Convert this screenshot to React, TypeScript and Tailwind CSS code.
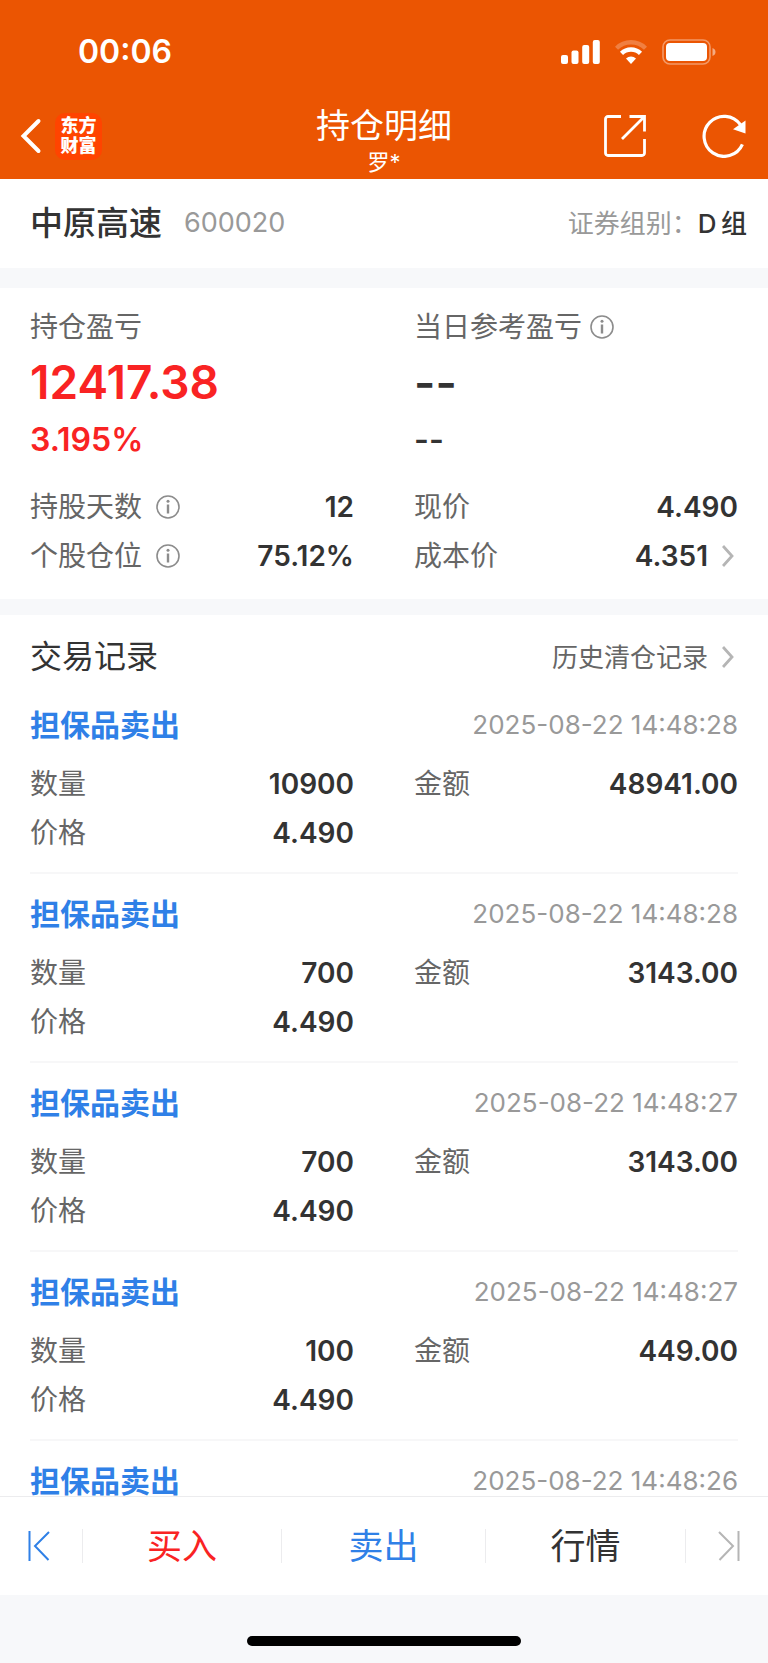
import type { ReactNode } from "react"

interface TradeRecord {
  type: string
  time: string
  details?: { quantity: string; amount: string; price: string }
}

const records: TradeRecord[] = [
  {
    type: "担保品卖出",
    time: "2025-08-22 14:48:28",
    details: { quantity: "10900", amount: "48941.00", price: "4.490" },
  },
  {
    type: "担保品卖出",
    time: "2025-08-22 14:48:28",
    details: { quantity: "700", amount: "3143.00", price: "4.490" },
  },
  {
    type: "担保品卖出",
    time: "2025-08-22 14:48:27",
    details: { quantity: "700", amount: "3143.00", price: "4.490" },
  },
  {
    type: "担保品卖出",
    time: "2025-08-22 14:48:27",
    details: { quantity: "100", amount: "449.00", price: "4.490" },
  },
  { type: "担保品卖出", time: "2025-08-22 14:48:26" },
]

function InfoIcon() {
  return (
    <svg viewBox="0 0 24 24" className="h-6 w-6 shrink-0 text-[#8c8c8c]" fill="none" stroke="currentColor" aria-hidden="true">
      <circle cx="12" cy="12" r="11" strokeWidth="1.6" />
      <path d="M12 9.5v9" strokeWidth="2.4" />
      <circle cx="12" cy="6.2" r="1.5" fill="currentColor" stroke="none" />
    </svg>
  )
}

function Chevron() {
  return (
    <svg viewBox="0 0 12 22" className="mr-1 h-[22px] w-3 shrink-0 text-[#b5b5b5]" fill="none" stroke="currentColor" strokeWidth="2.8" aria-hidden="true">
      <path d="M1 1l9 10L1 21" />
    </svg>
  )
}

function StatusBar() {
  return (
    <div className="flex h-[93px] items-center justify-between pt-2.5 pr-[52px] pl-[78px]">
      <span className="text-[32px] leading-10 font-semibold">00:06</span>
      <div className="flex items-center gap-[15px]">
        <svg viewBox="0 0 39 24" className="h-6 w-[39px]" fill="currentColor" aria-hidden="true">
          <rect x="0" y="15" width="7" height="9" rx="2" />
          <rect x="10.5" y="10.4" width="7" height="13.6" rx="2" />
          <rect x="21.2" y="5" width="7" height="19" rx="2" />
          <rect x="31.8" y="0" width="7" height="24" rx="2" />
        </svg>
        <svg viewBox="0 0 32 24" className="h-6 w-8" fill="none" stroke="currentColor" aria-hidden="true">
          <path d="M1.5 8.3a20.5 20.5 0 0 1 29 0" strokeWidth="4.4" opacity="0.25" />
          <path d="M6.5 13.4a13.5 13.5 0 0 1 19 0" strokeWidth="4.4" />
          <path d="M11 18.6a7.2 7.2 0 0 1 10 0L16 24z" fill="currentColor" stroke="none" />
        </svg>
        <svg viewBox="0 0 54 26" className="h-[26px] w-[54px]" fill="none" aria-hidden="true">
          <rect x="1" y="1" width="47" height="24" rx="7" stroke="currentColor" strokeWidth="1.6" opacity="0.4" />
          <rect x="4" y="4" width="41" height="18" rx="4" fill="currentColor" />
          <path d="M50.5 9c4 1.2 4 6.8 0 8z" fill="currentColor" opacity="0.5" />
        </svg>
      </div>
    </div>
  )
}

function NavBar() {
  return (
    <div className="grid h-[86px] grid-cols-3 items-center">
      <div className="flex items-center pl-5">
        <button type="button" aria-label="返回">
          <svg viewBox="0 0 22 36" className="h-9 w-[22px]" fill="none" stroke="currentColor" strokeWidth="4" strokeLinecap="round" aria-hidden="true">
            <path d="M18.5 3L3.5 18l15 15" />
          </svg>
        </button>
        <div className="ml-[13px] flex h-[47px] w-[47px] flex-col items-center justify-center rounded-[10px] bg-[#ff4400] text-[18px] leading-5 font-black">
          <span>东方</span>
          <span>财富</span>
        </div>
      </div>
      <div className="flex flex-col items-center pt-3">
        <h1 className="text-[34px] leading-10">持仓明细</h1>
        <p className="text-[22px] leading-8">罗*</p>
      </div>
      <div className="flex items-center justify-end gap-14 pr-[22px]">
        <button type="button" aria-label="分享">
          <svg viewBox="0 0 42 42" className="h-[42px] w-[42px]" fill="none" stroke="currentColor" strokeWidth="2.8" aria-hidden="true">
            <path d="M17 1.5H4A2.5 2.5 0 0 0 1.5 4v34A2.5 2.5 0 0 0 4 40.5h34a2.5 2.5 0 0 0 2.5-2.5V24" />
            <path d="M25.5 1.5h15v15M40 2L18 24" />
          </svg>
        </button>
        <button type="button" aria-label="刷新">
          <svg viewBox="0 0 44 44" className="h-11 w-11" fill="none" stroke="currentColor" strokeWidth="3.2" aria-hidden="true">
            <path d="M38.4 10.8A20 20 0 1 0 40.4 30.4" />
            <path d="M43.5 6.5v13L31 15.3z" fill="currentColor" stroke="none" />
          </svg>
        </button>
      </div>
    </div>
  )
}

function DataRow({ label, info, children }: { label: string; info?: boolean; children: ReactNode }) {
  return (
    <div className="flex h-[49px] items-center justify-between">
      <dt className="flex items-center gap-3.5 text-[#666]">
        {label}
        {info && <InfoIcon />}
      </dt>
      <dd className="flex items-center font-semibold text-[#333]">{children}</dd>
    </div>
  )
}

function RecordItem({ record }: { record: TradeRecord }) {
  return (
    <li className="border-b-2 border-[#f7f7f8] pt-1.5 pb-[15px] last:border-b-0 last:pb-0">
      <div className="flex h-[68px] items-center justify-between">
        <h3 className="text-[30px] leading-7 font-bold text-[#2f80e7]">{record.type}</h3>
        <time className="text-[26px] leading-7 text-[#999]">{record.time}</time>
      </div>
      {record.details && (
        <dl className="grid grid-cols-2 gap-x-[60px]">
          <DataRow label="数量">{record.details.quantity}</DataRow>
          <DataRow label="金额">{record.details.amount}</DataRow>
          <DataRow label="价格">{record.details.price}</DataRow>
        </dl>
      )}
    </li>
  )
}

export default function App() {
  return (
    <div className="flex h-screen flex-col bg-white font-['Inter','Noto_Sans_CJK_SC',sans-serif] text-[28px] text-[#333]">
      <header className="shrink-0 bg-[#eb5502] text-white">
        <StatusBar />
        <NavBar />
      </header>

      <main className="min-h-0 flex-1 overflow-hidden">
        <section className="flex h-[89px] items-center justify-between pr-[21px] pl-[30px]">
          <div className="flex items-center gap-[22px]">
            <h2 className="text-[33px] font-medium">中原高速</h2>
            <span className="text-[27px] text-[#999]">600020</span>
          </div>
          <p className="text-[26px]">
            <span className="text-[#999]">证券组别：</span>
            <span className="font-medium">{"D\u2009组"}</span>
          </p>
        </section>

        <div className="h-5 bg-[#f7f8fa]" />

        <section className="px-[30px] pt-4 pb-[19px]">
          <div className="grid grid-cols-2 gap-x-[60px] pb-4">
            <div>
              <h3 className="leading-[46px] text-[#666]">持仓盈亏</h3>
              <p className="text-[46px] leading-[64px] font-semibold text-[#f92323]">12417.38</p>
              <p className="text-[32px] leading-[52px] font-semibold text-[#f92323]">3.195%</p>
            </div>
            <div>
              <h3 className="flex items-center gap-2 leading-[46px] text-[#666]">
                当日参考盈亏
                <InfoIcon />
              </h3>
              <p className="text-[46px] leading-[64px] font-semibold">--</p>
              <p className="text-[32px] leading-[52px] font-semibold">--</p>
            </div>
          </div>
          <dl className="grid grid-cols-2 gap-x-[60px]">
            <DataRow label="持股天数" info>12</DataRow>
            <DataRow label="现价">4.490</DataRow>
            <DataRow label="个股仓位" info>75.12%</DataRow>
            <DataRow label="成本价">
              <button type="button" className="flex items-center gap-3.5">
                4.351
                <Chevron />
              </button>
            </DataRow>
          </dl>
        </section>

        <div className="h-4 bg-[#f7f8fa]" />

        <section className="px-[30px]">
          <div className="flex h-[70px] items-center justify-between pt-3.5">
            <h2 className="text-[32px]">交易记录</h2>
            <a href="#history" className="flex items-center gap-3.5 text-[26px] text-[#666]">
              历史清仓记录
              <Chevron />
            </a>
          </div>
          <ul>
            {records.map((record, index) => (
              <RecordItem key={index} record={record} />
            ))}
          </ul>
        </section>
      </main>

      <nav className="flex h-[99px] shrink-0 items-center border-t border-[#ececee] bg-white text-[35px]">
        <button type="button" aria-label="上一只" className="flex w-[82px] justify-center pr-1 text-[#2f80e7]">
          <svg viewBox="0 0 22 30" className="h-[30px] w-[22px]" fill="none" stroke="currentColor" strokeWidth="2" aria-hidden="true">
            <path d="M1.5 0v30M21 1L7 15l13.5 14" />
          </svg>
        </button>
        <div className="grid flex-1 grid-cols-[1fr_204px_1fr] divide-x divide-[#ececee] border-x border-[#ececee] leading-[34px]">
          <button type="button" className="text-[#f92323]">买入</button>
          <button type="button" className="text-[#2f80e7]">卖出</button>
          <button type="button">行情</button>
        </div>
        <button type="button" aria-label="下一只" className="flex w-[82px] justify-center pl-1 text-[#b5b5b5]">
          <svg viewBox="0 0 22 30" className="h-[30px] w-[22px]" fill="none" stroke="currentColor" strokeWidth="2" aria-hidden="true">
            <path d="M20.5 0v30M1 1l14 14L1.5 29" />
          </svg>
        </button>
      </nav>

      <div className="flex h-[68px] shrink-0 items-end justify-center bg-[#f7f8fa] pb-[17px]">
        <div className="h-2.5 w-[274px] rounded-full bg-black" />
      </div>
    </div>
  )
}
